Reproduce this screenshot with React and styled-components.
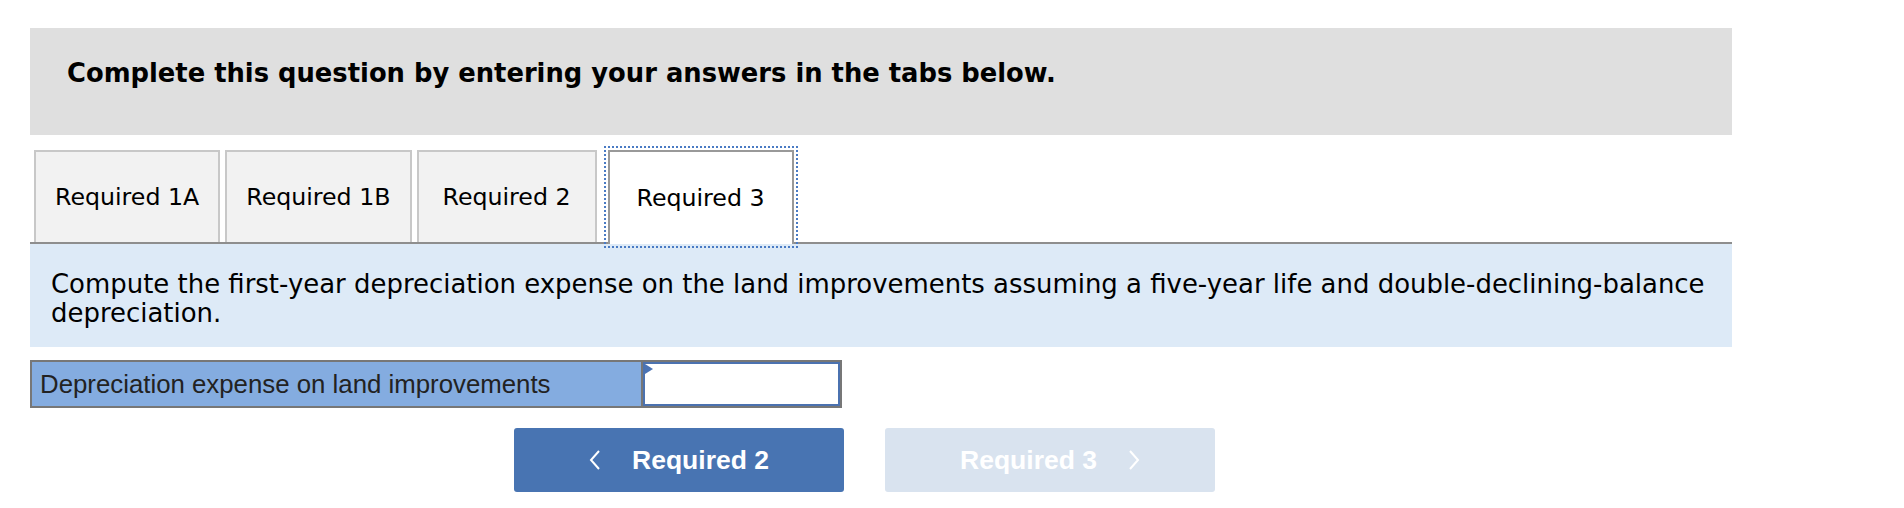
import React from "react";
import styled, { createGlobalStyle } from "styled-components";

const GlobalStyle = createGlobalStyle`
  body {
    margin: 0;
    background: #fff;
    font-family: "DejaVu Sans", Verdana, sans-serif;
  }
`;

const tabs = ["Required 1A", "Required 1B", "Required 2", "Required 3"];

const App = () => {
  return (
    <Page>
      <GlobalStyle />
      <Banner>Complete this question by entering your answers in the tabs below.</Banner>
      <TabBar>
        {tabs.map((t, i) => (
          <Tab key={t} active={i === tabs.length - 1}>
            {t}
          </Tab>
        ))}
      </TabBar>
      <Prompt>
        Compute the first-year depreciation expense on the land improvements assuming a
        five-year life and double-declining-balance depreciation.
      </Prompt>
      <AnswerRow>
        <AnswerLabel>Depreciation expense on land improvements</AnswerLabel>
        <AnswerCell>
          <AnswerInput type="text" />
        </AnswerCell>
      </AnswerRow>
      <NavRow>
        <NavButton>
          <Chevron dir="left" />
          <span>Required 2</span>
        </NavButton>
        <NavButton disabled>
          <span>Required 3</span>
          <Chevron dir="right" />
        </NavButton>
      </NavRow>
    </Page>
  );
};

function Chevron({ dir }) {
  const pts = dir === "left" ? "10,1 2,10 10,19" : "2,1 10,10 2,19";
  return (
    <svg width="12" height="20" viewBox="0 0 12 20">
      <polyline points={pts} fill="none" stroke="currentColor" strokeWidth="2" />
    </svg>
  );
}

const Page = styled.div`
  width: 1702px;
  padding: 28px 0 0 30px;
`;

const Banner = styled.div`
  box-sizing: border-box;
  height: 107px;
  background: #dfdfdf;
  padding: 32px 37px;
  font-weight: bold;
  font-size: 25.8px;
  line-height: 26px;
  color: #000;
`;

const TabBar = styled.div`
  display: flex;
  gap: 5px;
  margin-top: 15px;
  padding-left: 4px;
  border-bottom: 2px solid #8e8e8e;
  height: 92px;
`;

const Tab = styled.div`
  box-sizing: border-box;
  min-width: ${(p) => (p.active ? "186px" : "180px")};
  height: ${(p) => (p.active ? "94px" : "92px")};
  margin-left: ${(p) => (p.active ? "6px" : "0")};
  display: flex;
  align-items: center;
  justify-content: center;
  padding: 0 19px;
  font-size: 23.7px;
  color: #000;
  background: ${(p) => (p.active ? "#fff" : "#f2f2f2")};
  border: 2px solid ${(p) => (p.active ? "#999" : "#c8c8c8")};
  border-bottom: none;
  outline: ${(p) => (p.active ? "2px dotted #4a7bc4" : "none")};
  outline-offset: 2px;
`;

const Prompt = styled.div`
  background: #ddeaf7;
  padding: 26px 8px 19px 21px;
  font-size: 25.95px;
  line-height: 29px;
  color: #000;
`;

const AnswerRow = styled.div`
  display: flex;
  width: 812px;
  height: 48px;
  box-sizing: border-box;
  margin-top: 13px;
  border: 2px solid #777;
`;

const AnswerLabel = styled.div`
  box-sizing: border-box;
  flex: none;
  width: 611px;
  background: #84ace0;
  border-right: 2px solid #777;
  display: flex;
  align-items: center;
  padding-left: 8px;
  font-family: "Liberation Sans", Arial, sans-serif;
  font-size: 25.8px;
  color: #222;
`;

const AnswerCell = styled.div`
  position: relative;
  flex: 1;
  min-width: 0;
  display: flex;
  &::before {
    content: "";
    position: absolute;
    left: 2px;
    top: 2px;
    border-left: 8px solid #4a73b5;
    border-top: 5px solid transparent;
    border-bottom: 5px solid transparent;
  }
`;

const AnswerInput = styled.input`
  flex: 1;
  min-width: 0;
  width: 100%;
  margin: 0;
  border: 2px solid #4b72b0;
  background: #fff;
  outline: none;
  font-size: 20px;
`;

const NavRow = styled.div`
  display: flex;
  gap: 41px;
  margin-top: 20px;
  padding-left: 484px;
`;

const NavButton = styled.button`
  width: 330px;
  height: 64px;
  border: none;
  border-radius: 3px;
  background: ${(p) => (p.disabled ? "#d9e3ef" : "#4874b2")};
  color: #fff;
  display: flex;
  align-items: center;
  justify-content: center;
  gap: 31px;
  font-family: "Liberation Sans", Arial, sans-serif;
  font-weight: bold;
  font-size: 26.5px;
  cursor: ${(p) => (p.disabled ? "default" : "pointer")};
  svg {
    flex: none;
  }
`;

export default App;
